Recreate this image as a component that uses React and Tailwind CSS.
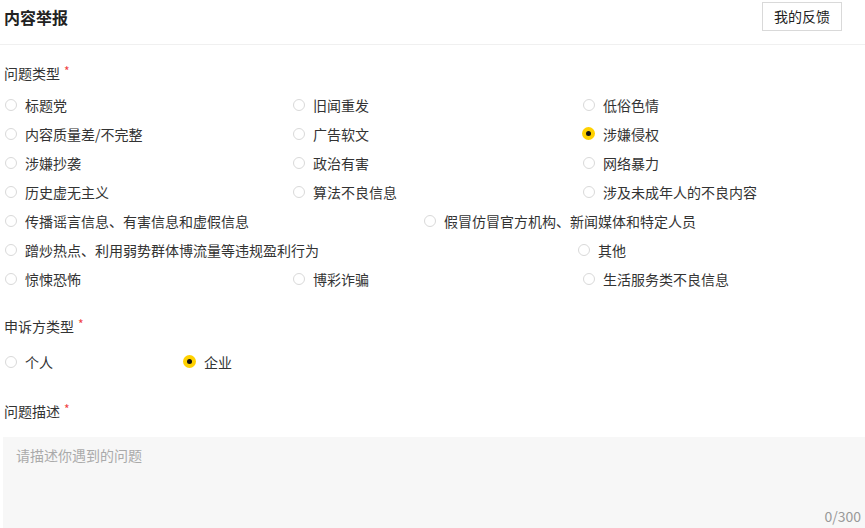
import { useState } from "react";

const FONT = { fontFamily: '"Microsoft YaHei", "Noto Sans CJK SC", "Noto Sans", sans-serif' };

const REASON_ROWS = [
  [
    { label: "标题党", w: "w-[288px]" },
    { label: "旧闻重发", w: "w-[290px]" },
    { label: "低俗色情" },
  ],
  [
    { label: "内容质量差/不完整", w: "w-[288px]" },
    { label: "广告软文", w: "w-[290px]" },
    { label: "涉嫌侵权" },
  ],
  [
    { label: "涉嫌抄袭", w: "w-[288px]" },
    { label: "政治有害", w: "w-[290px]" },
    { label: "网络暴力" },
  ],
  [
    { label: "历史虚无主义", w: "w-[288px]" },
    { label: "算法不良信息", w: "w-[290px]" },
    { label: "涉及未成年人的不良内容" },
  ],
  [
    { label: "传播谣言信息、有害信息和虚假信息", w: "w-[419px]" },
    { label: "假冒仿冒官方机构、新闻媒体和特定人员" },
  ],
  [
    { label: "蹭炒热点、利用弱势群体博流量等违规盈利行为", w: "w-[573px]" },
    { label: "其他" },
  ],
  [
    { label: "惊悚恐怖", w: "w-[288px]" },
    { label: "博彩诈骗", w: "w-[290px]" },
    { label: "生活服务类不良信息" },
  ],
];

function Radio({ label, checked, onSelect, className = "" }) {
  return (
    <button
      type="button"
      onClick={onSelect}
      className={`flex h-[29px] shrink-0 items-center text-left ${className}`}
    >
      <span className="flex w-[13px] items-center justify-center">
        {checked ? (
          <span className="flex h-[13px] w-[13px] items-center justify-center rounded-full bg-[#ffd100]">
            <span className="h-[5px] w-[5px] rounded-full bg-[#111]" />
          </span>
        ) : (
          <span className="h-[12px] w-[12px] rounded-full border-[1.5px] border-[#d9d9d9] bg-white" />
        )}
      </span>
      <span className="ml-[8px] text-[14px] leading-none text-[#333]">{label}</span>
    </button>
  );
}

function FieldLabel({ children, className = "" }) {
  return (
    <div className={`flex h-[20px] items-center text-[14px] text-[#333] ${className}`}>
      {children}
      <span className="ml-[4px] -mt-[4px] text-[12px] text-[#f04142]">*</span>
    </div>
  );
}

export default function App() {
  const [reason, setReason] = useState("涉嫌侵权");
  const [party, setParty] = useState("企业");
  const [desc, setDesc] = useState("");

  return (
    <div className="h-[528px] w-[865px] overflow-hidden bg-white" style={FONT}>
      <div className="flex h-[45px] items-center justify-between border-b border-[#f0f0f0] pl-[4px] pr-[23px]">
        <h1 className="-mt-[10px] text-[16px] font-bold text-[#222]">内容举报</h1>
        <button
          type="button"
          className="-mt-[11px] flex h-[29px] w-[80px] items-center justify-center border border-[#d9d9d9] bg-white text-[14px] text-[#222]"
        >
          我的反馈
        </button>
      </div>

      <div className="pl-[4px]">
        <FieldLabel className="mt-[18px]">问题类型</FieldLabel>
        <div className="mt-[7px] flex flex-col">
          {REASON_ROWS.map((row, i) => (
            <div key={i} className="flex">
              {row.map((item) => (
                <Radio
                  key={item.label}
                  label={item.label}
                  className={item.w}
                  checked={reason === item.label}
                  onSelect={() => setReason(item.label)}
                />
              ))}
            </div>
          ))}
        </div>

        <FieldLabel className="mt-[23px]">申诉方类型</FieldLabel>
        <div className="mt-[11px] flex">
          {["个人", "企业"].map((p) => (
            <Radio
              key={p}
              label={p}
              className="w-[179px]"
              checked={party === p}
              onSelect={() => setParty(p)}
            />
          ))}
        </div>

        <FieldLabel className="mt-[25px]">问题描述</FieldLabel>
      </div>

      <div className="relative ml-[3px] mt-[16px] h-[100px] bg-[#f7f7f7]">
        <textarea
          value={desc}
          onChange={(e) => setDesc(e.target.value.slice(0, 300))}
          placeholder="请描述你遇到的问题"
          className="h-full w-full resize-none bg-transparent px-[13px] py-[8px] text-[14px] text-[#333] outline-none placeholder:text-[#aaa]"
        />
        <span className="absolute right-[4px] top-[69px] text-[14px] text-[#999]">
          {desc.length}/300
        </span>
      </div>
    </div>
  );
}
